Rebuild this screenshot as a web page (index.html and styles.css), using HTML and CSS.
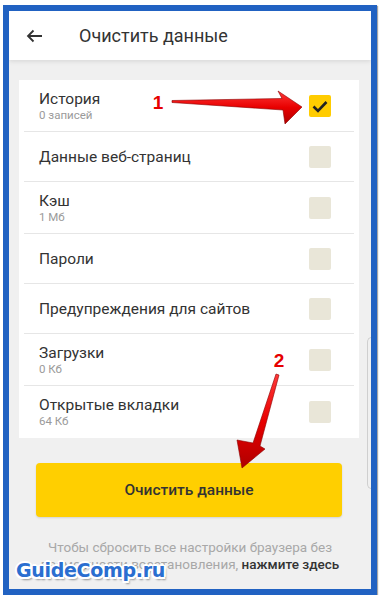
FILE: index.html
```html
<!DOCTYPE html>
<html lang="ru">
<head>
<meta charset="utf-8">
<title>Очистить данные</title>
<link rel="stylesheet" href="styles.css">
</head>
<body>
<div class="frame">
  <header class="header">
    <svg class="back" width="17" height="14" viewBox="0 0 17 14"><path d="M16 7H2M7.5 1.5L2 7l5.5 5.5" fill="none" stroke="#333" stroke-width="1.8"/></svg>
    <h1 class="title">Очистить данные</h1>
  </header>

  <div class="card">
    <div class="row two">
      <div class="txt"><div class="name">История</div><div class="sub">0 записей</div></div>
      <span class="cb checked"><svg width="22" height="22" viewBox="0 0 22 22"><path d="M4.5 11.5l4.5 4.5 8.5-9" fill="none" stroke="#222" stroke-width="2.6"/></svg></span>
    </div>
    <div class="row">
      <div class="txt"><div class="name">Данные веб-страниц</div></div>
      <span class="cb"></span>
    </div>
    <div class="row two">
      <div class="txt"><div class="name">Кэш</div><div class="sub">1 Мб</div></div>
      <span class="cb"></span>
    </div>
    <div class="row">
      <div class="txt"><div class="name">Пароли</div></div>
      <span class="cb"></span>
    </div>
    <div class="row">
      <div class="txt"><div class="name">Предупреждения для сайтов</div></div>
      <span class="cb"></span>
    </div>
    <div class="row two">
      <div class="txt"><div class="name">Загрузки</div><div class="sub">0 Кб</div></div>
      <span class="cb"></span>
    </div>
    <div class="row two last">
      <div class="txt"><div class="name">Открытые вкладки</div><div class="sub">64 Кб</div></div>
      <span class="cb"></span>
    </div>
  </div>

  <button class="btn">Очистить данные</button>

  <p class="foot">Чтобы сбросить все настройки браузера без возможности восстановления, <b>нажмите здесь</b></p>

  <div class="scroll"></div>

  <svg class="annot" viewBox="9 11 362 578" width="362" height="578">
    <defs>
      <linearGradient id="rg" x1="0" y1="0" x2="0" y2="1">
        <stop offset="0" stop-color="#ff3a3a"/>
        <stop offset="0.5" stop-color="#e80000"/>
        <stop offset="1" stop-color="#b00000"/>
      </linearGradient>
    </defs>
    <polygon points="172,100.5 282,98.5 278,91 302,107 285,124 283,110 172,102.5" fill="url(#rg)" stroke="#8a0000" stroke-width="0.6"/>
    <polygon points="279,375 260,446 265,449 242,468 237,440 253,443 276,374" fill="url(#rg)" stroke="#8a0000" stroke-width="0.6"/>
    <text x="158" y="109" class="num">1</text>
    <text x="279" y="367" class="num">2</text>
  </svg>

  <div class="mark">GuideComp.ru</div>
</div>
</body>
</html>
```

FILE: styles.css
```css
html, body {
  margin: 0;
  padding: 0;
  background: #fff;
}
body {
  font-family: Roboto, "Noto Sans", sans-serif;
  color: #333;
}
.frame {
  position: relative;
  margin: 5px 0 0 3px;
  width: 362px;
  height: 578px;
  border: 6px solid #2162c2;
  background: #f0f0f0;
  overflow: hidden;
  box-shadow: 1px 1px 1px rgba(0,0,0,0.35);
}
.header {
  height: 49px;
  background: #fff;
  display: flex;
  align-items: center;
  box-shadow: 0 1px 5px rgba(0,0,0,0.12);
  position: relative;
}
.back {
  margin-left: 17px;
  flex: none;
}
.title {
  margin: 0 0 0 36px;
  font-size: 18px;
  font-weight: 400;
  color: #333;
}
.card {
  margin: 20px 12px 0 10px;
  background: #fff;
  padding: 0 5px;
}
.row {
  height: 49px;
  border-bottom: 1px solid #e6e6e6;
  display: flex;
  align-items: center;
  justify-content: space-between;
  padding: 0 23px 0 15px;
}
.row.two {
  height: 51px;
}
.row.last {
  height: 52px;
  border-bottom: none;
}
.name {
  font-size: 15.5px;
  line-height: 18px;
  color: #333;
}
.sub {
  font-size: 11.5px;
  line-height: 14px;
  color: #9a9a9a;
}
.cb {
  width: 22px;
  height: 22px;
  border-radius: 2px;
  background: #e9e6d8;
  flex: none;
  display: block;
}
.cb.checked {
  background: #ffcc00;
}
.cb svg {
  display: block;
}
.btn {
  display: block;
  margin: 25px 0 0 27px;
  width: 306px;
  height: 54px;
  border: none;
  border-radius: 4px;
  background: #ffcf00;
  box-shadow: 0 1px 2px rgba(0,0,0,0.12);
  font-family: Roboto, "Noto Sans", sans-serif;
  font-size: 15.5px;
  font-weight: 500;
  color: #333;
  padding: 0;
}
.foot {
  margin: 22px 16px 0;
  text-align: center;
  font-size: 13.5px;
  line-height: 17px;
  color: #a8a8a8;
}
.foot b {
  color: #333;
  font-weight: 500;
}
.scroll {
  position: absolute;
  left: 358px;
  top: 326px;
  width: 5px;
  height: 150px;
  border: 1px solid #cfcfcf;
  border-right: none;
  border-radius: 5px 0 0 5px;
}
.annot {
  position: absolute;
  left: 0;
  top: 0;
}
.num {
  font-family: "Liberation Sans", Arial, sans-serif;
  font-weight: 700;
  font-size: 19px;
  fill: #e60000;
  stroke: #fff;
  stroke-width: 3px;
  paint-order: stroke fill;
  text-anchor: middle;
}
.mark {
  position: absolute;
  left: 7px;
  top: 548px;
  font-family: "DejaVu Sans", sans-serif;
  font-weight: 700;
  font-size: 19px;
  color: #2a6ed0;
  letter-spacing: -0.3px;
  text-shadow: -1.5px -1.5px 0 #fff, 1.5px -1.5px 0 #fff, -1.5px 1.5px 0 #fff, 1.5px 1.5px 0 #fff, 0 -2px 0 #fff, 0 2px 0 #fff, -2px 0 0 #fff, 2px 0 0 #fff, 2px 3px 2px rgba(0,0,0,0.4);
}
```
